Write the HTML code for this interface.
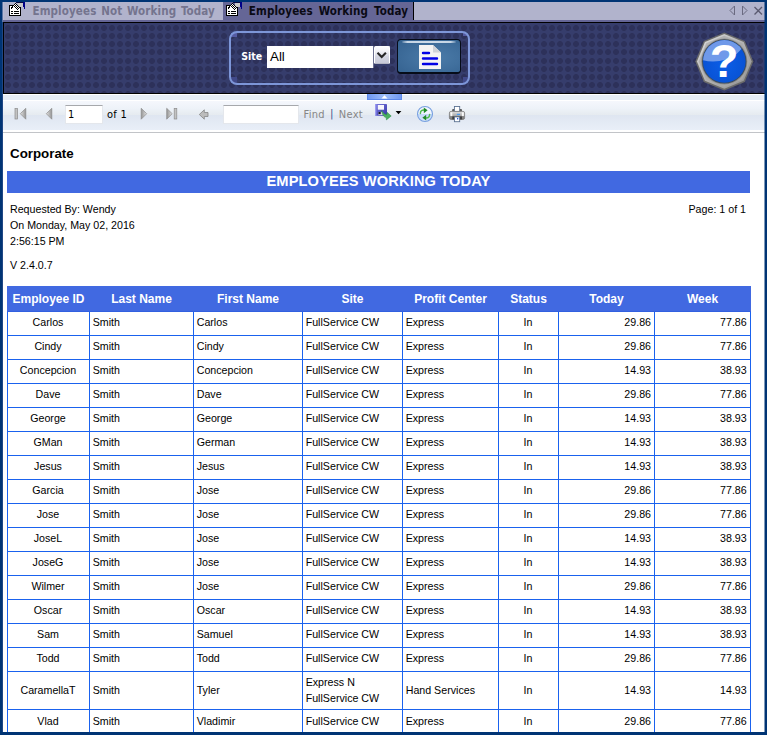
<!DOCTYPE html>
<html>
<head>
<meta charset="utf-8">
<title>Employees Working Today</title>
<style>
html,body{margin:0;padding:0;}
body{width:767px;height:735px;overflow:hidden;background:#003474;position:relative;font-family:"Liberation Sans",sans-serif;}
.abs{position:absolute;}
#hl{left:2px;top:2px;width:763px;height:730px;background:#1f4785;}
#content{left:3px;top:2px;width:762px;height:730px;background:#fff;overflow:hidden;}
/* tab bar */
#tabbar{left:0;top:0;width:762px;height:18px;background:#b1b3cc;}
#tabstrip{left:0;top:18px;width:762px;height:2px;background:#656696;}
#tabhl{left:2px;top:2px;width:1px;height:20px;background:#5c76a4;}
.tab{position:absolute;top:0;height:18px;font-family:"DejaVu Sans Condensed","DejaVu Sans","Liberation Sans",sans-serif;font-weight:bold;font-size:11.5px;letter-spacing:.12px;word-spacing:1px;line-height:18px;white-space:nowrap;}
#tab1{left:0;width:220px;color:#74748e;}
#tab2{left:220px;width:191px;height:20px;background:#656696;color:#0a0a14;}
#tab2:after{content:"";position:absolute;right:0;top:0;width:1px;height:18px;background:#000;}
.tab span{position:absolute;left:29.5px;top:0;}
/* panel */
#panel{left:0;top:20px;width:762px;height:70px;border-top:1px solid #000;border-left:1px solid #000;border-bottom:1px solid #000;
 background-color:#363d6c;
 background-image:radial-gradient(circle at 4px 4px,#2d315a 0,#2d315a 2.55px,rgba(45,49,90,0) 3.35px),radial-gradient(circle at 4px 12px,#2d315a 0,#2d315a 2.55px,rgba(45,49,90,0) 3.35px),radial-gradient(circle at 4px 20px,#2d315a 0,#2d315a 2.55px,rgba(45,49,90,0) 3.35px),radial-gradient(circle at 4px 28px,#2d315a 0,#2d315a 2.55px,rgba(45,49,90,0) 3.35px);
 background-size:8px 33px;background-position:0px 1px;}
#sitebox{left:226px;top:29px;width:237px;height:50px;border:2px solid #7d96d8;border-radius:8px;box-sizing:content-box;}
#sitelbl{left:238.3px;top:45.7px;color:#fff;font-weight:bold;font-size:10.5px;font-family:"DejaVu Sans Condensed","Liberation Sans",sans-serif;line-height:16px;}
#sitesel{left:264px;top:44px;width:106px;height:22px;background:#fff;border-right:1px solid #6c7090;}
#sitesel span{position:absolute;left:3px;top:1.5px;font-size:13.33px;line-height:18px;color:#000;}
#selbtn{left:371px;top:44px;width:16px;height:18px;background:linear-gradient(#fdfdfe 0,#f4f4f8 25%,#d4d6e2 60%,#c8cad8 100%);border:1px solid #fff;border-bottom-color:#b4b6c4;border-radius:1.5px;box-sizing:border-box;}
#gobtn{left:394px;top:37px;width:64px;height:35px;border-radius:4px;border:1px solid #060c18;border-bottom-width:2px;box-sizing:border-box;background:radial-gradient(ellipse at 60% 55%,#4b7ba8 0,#41709e 45%,#33608e 100%);}
/* toolbar */
#tbtop{left:0;top:92px;width:762px;height:6px;background:#e5ecf6;border-top:1px solid #fff;}
#toolbar{left:0;top:98px;width:762px;height:32px;background:linear-gradient(#ffffff 0,#ffffff 1px,#f5f7fc 1px,#eef3f9 8px,#e5eaef 15.5px,#dfe6f1 15.5px,#e9eff8 30.5px,#ffffff 30.5px,#ffffff 32px);border-bottom:1px solid #c2c4c8;}
#handle{left:364px;top:92px;width:35px;height:6px;box-sizing:border-box;background:linear-gradient(90deg,#7098f0 0,#9dbcf8 50%,#7098f0 100%);border:1px solid #5c88ea;border-top:0;}
.tbtxt{position:absolute;font-family:"DejaVu Sans Condensed","Liberation Sans",sans-serif;font-size:11px;letter-spacing:.3px;line-height:16px;white-space:nowrap;}
.inp{position:absolute;background:#fff;border:1px solid #e4e7ec;border-top-color:#a6a8ac;box-sizing:border-box;}
/* report */
#report{left:0;top:131px;width:762px;height:599px;background:#fff;font-size:10.67px;color:#000;}
#report div{position:absolute;white-space:nowrap;}
#titlebar{left:4px;top:38px;width:743px;height:22px;background:#4169e1;color:#fff;font-weight:bold;font-size:14.67px;line-height:20px;text-align:center;letter-spacing:.11px;}
table{position:absolute;left:4px;top:153px;border-collapse:collapse;table-layout:fixed;width:743px;font-size:10.67px;}
th{background:#4169e1;color:#fff;font-weight:bold;font-size:12px;height:25px;box-sizing:border-box;padding:0;line-height:14px;border:1px solid #4169e1;border-bottom-color:#3260e0;text-align:center;}
td{border:1px solid #1a62ee;height:24px;padding:0 3px 4px 2.7px;line-height:16px;box-sizing:border-box;}
tr.tall td{height:38px;padding-bottom:2px;}
tr.last td{padding-bottom:2px;}
td.c{text-align:center;padding-left:2px;padding-right:3px;}
td.r{text-align:right;}
td.r:last-child{padding-right:3.3px;}
</style>
</head>
<body>
<div id="hl" class="abs"></div>
<div id="tabhl" class="abs"></div>
<div id="content" class="abs">
  <div id="tabbar" class="abs"></div>
  <div class="abs" style="left:0;top:0;width:1px;height:18px;background:#b8b9d3"></div>
  <div id="tabstrip" class="abs"></div>
  <div id="tab1" class="tab"><span>Employees Not Working Today</span></div>
  <div id="tab2" class="tab"><span style="left:25.8px;word-spacing:2.3px">Employees Working Today</span></div>
  <svg class="abs" style="left:5px;top:0px" width="18" height="16" viewBox="0 0 18 16" shape-rendering="crispEdges">
<rect x="1.5" y="3.5" width="11" height="10" fill="#fff" stroke="#000"/>
<rect x="3" y="9" width="2" height="1" fill="#000"/><rect x="6" y="9" width="5" height="1" fill="#000"/>
<rect x="3" y="11" width="2" height="1" fill="#000"/><rect x="6" y="11" width="5" height="1" fill="#000"/>
<rect x="8" y="0" width="7" height="1" fill="#0c0c40"/>
<rect x="10" y="1" width="5" height="4" fill="#c8c8c8"/>
<rect x="7" y="2" width="1" height="1" fill="#fff"/><rect x="6" y="3" width="1" height="1" fill="#fff"/><rect x="8" y="3" width="1" height="1" fill="#fff"/><rect x="5" y="4" width="1" height="1" fill="#fff"/><rect x="7" y="4" width="1" height="1" fill="#fff"/><rect x="9" y="4" width="1" height="1" fill="#fff"/><rect x="6" y="5" width="1" height="1" fill="#fff"/><rect x="8" y="5" width="1" height="1" fill="#fff"/><rect x="10" y="5" width="1" height="1" fill="#fff"/><rect x="9" y="6" width="1" height="1" fill="#fff"/><rect x="5" y="5" width="1" height="1" fill="#fff"/><rect x="7" y="1" width="1" height="1" fill="#000"/><rect x="6" y="2" width="1" height="1" fill="#000"/><rect x="8" y="2" width="1" height="1" fill="#000"/><rect x="5" y="3" width="1" height="1" fill="#000"/><rect x="7" y="3" width="1" height="1" fill="#000"/><rect x="9" y="3" width="1" height="1" fill="#000"/><rect x="4" y="4" width="1" height="1" fill="#000"/><rect x="6" y="4" width="1" height="1" fill="#000"/><rect x="8" y="4" width="1" height="1" fill="#000"/><rect x="10" y="4" width="1" height="1" fill="#000"/><rect x="7" y="5" width="1" height="1" fill="#000"/><rect x="9" y="5" width="1" height="1" fill="#000"/><rect x="11" y="5" width="1" height="1" fill="#000"/><rect x="8" y="6" width="1" height="1" fill="#000"/><rect x="10" y="6" width="1" height="1" fill="#000"/><rect x="9" y="7" width="1" height="1" fill="#000"/><rect x="3" y="5" width="1" height="1" fill="#000"/><rect x="4" y="5" width="1" height="1" fill="#000"/><rect x="3" y="6" width="1" height="1" fill="#000"/>
<polygon points="15,0 17,0 17,6.7 16.3,6.7 15,4" fill="#000088"/>
</svg><svg class="abs" style="left:222px;top:0px" width="18" height="16" viewBox="0 0 18 16" shape-rendering="crispEdges">
<rect x="1.5" y="3.5" width="11" height="10" fill="#fff" stroke="#000"/>
<rect x="3" y="9" width="2" height="1" fill="#000"/><rect x="6" y="9" width="5" height="1" fill="#000"/>
<rect x="3" y="11" width="2" height="1" fill="#000"/><rect x="6" y="11" width="5" height="1" fill="#000"/>
<rect x="8" y="0" width="7" height="1" fill="#0c0c40"/>
<rect x="10" y="1" width="5" height="4" fill="#c8c8c8"/>
<rect x="7" y="2" width="1" height="1" fill="#fff"/><rect x="6" y="3" width="1" height="1" fill="#fff"/><rect x="8" y="3" width="1" height="1" fill="#fff"/><rect x="5" y="4" width="1" height="1" fill="#fff"/><rect x="7" y="4" width="1" height="1" fill="#fff"/><rect x="9" y="4" width="1" height="1" fill="#fff"/><rect x="6" y="5" width="1" height="1" fill="#fff"/><rect x="8" y="5" width="1" height="1" fill="#fff"/><rect x="10" y="5" width="1" height="1" fill="#fff"/><rect x="9" y="6" width="1" height="1" fill="#fff"/><rect x="5" y="5" width="1" height="1" fill="#fff"/><rect x="7" y="1" width="1" height="1" fill="#000"/><rect x="6" y="2" width="1" height="1" fill="#000"/><rect x="8" y="2" width="1" height="1" fill="#000"/><rect x="5" y="3" width="1" height="1" fill="#000"/><rect x="7" y="3" width="1" height="1" fill="#000"/><rect x="9" y="3" width="1" height="1" fill="#000"/><rect x="4" y="4" width="1" height="1" fill="#000"/><rect x="6" y="4" width="1" height="1" fill="#000"/><rect x="8" y="4" width="1" height="1" fill="#000"/><rect x="10" y="4" width="1" height="1" fill="#000"/><rect x="7" y="5" width="1" height="1" fill="#000"/><rect x="9" y="5" width="1" height="1" fill="#000"/><rect x="11" y="5" width="1" height="1" fill="#000"/><rect x="8" y="6" width="1" height="1" fill="#000"/><rect x="10" y="6" width="1" height="1" fill="#000"/><rect x="9" y="7" width="1" height="1" fill="#000"/><rect x="3" y="5" width="1" height="1" fill="#000"/><rect x="4" y="5" width="1" height="1" fill="#000"/><rect x="3" y="6" width="1" height="1" fill="#000"/>
<polygon points="15,0 17,0 17,6.7 16.3,6.7 15,4" fill="#000088"/>
</svg><svg class="abs" style="left:724px;top:3px" width="37" height="12" viewBox="0 0 37 12">
<polygon points="3,5.5 7.5,1 7.5,10" fill="none" stroke="#6a6a80" stroke-width="1"/>
<polygon points="20,5.5 15.5,1 15.5,10" fill="none" stroke="#6a6a80" stroke-width="1"/>
<path d="M27.5,2 L35,9.5 M35,2 L27.5,9.5" stroke="#5a5a70" stroke-width="1.4" fill="none"/>
</svg>
  <div id="panel" class="abs"></div>
    <div class="abs" style="left:228px;top:31px;width:6px;height:4px;background:#555ba2;"></div>
  <div class="abs" style="left:228px;top:75px;width:6px;height:6px;background:#414989;"></div>
  <div class="abs" style="left:460px;top:31px;width:4px;height:3px;background:#555ba2;"></div>
  <div class="abs" style="left:460px;top:75px;width:5px;height:6px;background:#414989;"></div>
  <div id="sitebox" class="abs"></div>
  <div id="sitelbl" class="abs">Site</div>
  <div id="sitesel" class="abs"><span>All</span></div>
  <div id="selbtn" class="abs"><svg width="16" height="18" viewBox="0 0 16 18" style="position:absolute;left:-1px;top:-1px"><path d="M3.5,6.8 L7.7,11 L11.9,6.8" fill="none" stroke="#262626" stroke-width="2.1"/></svg></div>
  <div id="gobtn" class="abs"><div style="position:absolute;left:4px;top:1px;width:54px;height:2px;border-radius:2px;background:linear-gradient(90deg,rgba(200,216,232,.2),#c4d4e4 10%,#cddbe9 50%,#c4d4e4 90%,rgba(200,216,232,.2));"></div>
<svg width="24" height="26" viewBox="0 0 24 26" style="position:absolute;left:20px;top:4px"><path d="M1,1 H15 L23,8.5 V25 H1 Z" fill="#f3f3f3"/><path d="M15,1 L23,8.5 H15 Z" fill="#cfd2d8"/>
<path d="M5,9 H11 M5,14.5 H19 M5,20 H19" stroke="#0000e6" stroke-width="2.4" stroke-linecap="round"/></svg></div>
  <svg class="abs" style="left:684px;top:22px" width="74" height="74" viewBox="0 0 74 74">
<defs><linearGradient id="hg" x1="0" y1="0" x2="1" y2="1"><stop offset="0" stop-color="#e0e0e0"/><stop offset=".5" stop-color="#b4b4b4"/><stop offset="1" stop-color="#8c8c8c"/></linearGradient>
<radialGradient id="hb" cx=".5" cy=".55" r=".6"><stop offset="0" stop-color="#0c5ee8"/><stop offset="1" stop-color="#0850d0"/></radialGradient>
<clipPath id="hc"><circle cx="37.3" cy="37.4" r="21.3"/></clipPath></defs>
<polygon points="37.3,8.4 16.8,16.9 8.3,37.4 16.8,57.9 37.3,66.4 57.8,57.9 66.3,37.4 57.8,16.9" fill="#6a6a6a"/>
<polygon points="37.3,10.0 17.9,18.0 9.9,37.4 17.9,56.8 37.3,64.8 56.7,56.8 64.7,37.4 56.7,18.0" fill="url(#hg)"/>
<polygon points="37.3,11.8 19.2,19.3 11.7,37.4 19.2,55.5 37.3,63.0 55.4,55.5 62.9,37.4 55.4,19.3" fill="#a9a9a9" opacity=".75"/>
<circle cx="37.3" cy="37.4" r="23" fill="#8a8a8a"/>
<circle cx="37.3" cy="37.4" r="22.2" fill="#3a4a5c"/>
<circle cx="37.3" cy="37.4" r="21.3" fill="url(#hb)"/>
<ellipse cx="26" cy="10" rx="34" ry="27.5" fill="#78a0ea" opacity=".92" clip-path="url(#hc)"/>
<text x="37.2" y="52.8" font-family="Liberation Sans, sans-serif" font-weight="bold" font-size="47" fill="#fff" text-anchor="middle">?</text>
</svg>
  <div id="tbtop" class="abs"></div>
  <div id="toolbar" class="abs"></div>
  <svg class="abs" style="left:0;top:96px" width="761" height="32" viewBox="0 0 761 32">
<defs><linearGradient id="ng" x1="0" y1="0" x2="1" y2="0"><stop offset="0" stop-color="#e2e2e2"/><stop offset="1" stop-color="#949494"/></linearGradient>
<linearGradient id="ng2" x1="1" y1="0" x2="0" y2="0"><stop offset="0" stop-color="#e2e2e2"/><stop offset="1" stop-color="#949494"/></linearGradient>
<linearGradient id="fl" x1="0" y1="0" x2="1" y2="1"><stop offset="0" stop-color="#7a7ae0"/><stop offset="1" stop-color="#3434a8"/></linearGradient>
<linearGradient id="pr" x1="0" y1="0" x2="0" y2="1"><stop offset="0" stop-color="#e2e2e2"/><stop offset=".55" stop-color="#a8a8a8"/><stop offset=".6" stop-color="#8c8c8c"/><stop offset="1" stop-color="#7a7a7a"/></linearGradient>
<linearGradient id="rf" x1="0" y1="0" x2="0" y2="1"><stop offset="0" stop-color="#f4f8ff"/><stop offset=".5" stop-color="#eef4fe"/><stop offset=".5" stop-color="#c4d8f8"/><stop offset="1" stop-color="#d4e4fa"/></linearGradient></defs>
<!-- first -->
<rect x="12" y="10.5" width="2.6" height="10.5" fill="#c2c2c2" stroke="#8c8c8c" stroke-width=".7"/>
<polygon points="17.3,15.7 22.8,10.3 22.8,21.2" fill="url(#ng)" stroke="#8c8c8c" stroke-width=".7"/>
<!-- prev -->
<polygon points="43.3,15.7 48.8,10.3 48.8,21.2" fill="url(#ng)" stroke="#8c8c8c" stroke-width=".7"/>
<!-- next -->
<polygon points="143.7,15.7 138.2,10.3 138.2,21.2" fill="url(#ng2)" stroke="#8c8c8c" stroke-width=".7"/>
<!-- last -->
<polygon points="169.2,15.7 163.7,10.3 163.7,21.2" fill="url(#ng2)" stroke="#8c8c8c" stroke-width=".7"/>
<rect x="171.2" y="10.5" width="2.6" height="10.5" fill="#c2c2c2" stroke="#8c8c8c" stroke-width=".7"/>
<!-- back -->
<path d="M196.3,16.5 L201.3,11.8 V14.5 H205 V18.5 H201.3 V21.2 Z" fill="#bcbcbc" stroke="#868686" stroke-width=".8"/>
<!-- save -->
<rect x="372" y="6" width="12" height="11.8" rx=".8" fill="url(#fl)"/>
<rect x="372" y="6" width="1.4" height="11.8" fill="#9c9cf0"/>
<rect x="374.8" y="7" width="6.2" height="4.7" fill="#f6f6fc"/>
<rect x="375.5" y="14" width="4.5" height="3" fill="#dcdce8"/>
<rect x="375.5" y="14" width="2.2" height="2.2" fill="#101020"/>
<path d="M378.6,12.3 C379.8,15 381.2,16.4 383.7,16.8 L384.1,14.3 L388.2,18 L383.4,21.9 L383.2,19.6 C380.8,19.2 379,16.4 378.6,12.3 Z" fill="#4bb060" stroke="#2f8c46" stroke-width=".5"/>
<polygon points="392.6,13 398.4,13 395.5,16.2" fill="#000"/>
<!-- refresh -->
<circle cx="422" cy="16" r="7.5" fill="url(#rf)" stroke="#78a0e0" stroke-width="1.1"/>
<path d="M417.4,15.4 C417.4,12.8 419,11.9 421.4,12.1" fill="none" stroke="#52bc52" stroke-width="1.5" stroke-linecap="round"/>
<polygon points="420.8,9.4 424.6,12.3 420.8,15.2" fill="#1f8a24"/>
<path d="M426.6,16.6 C426.6,19.2 425,20.1 422.6,19.9" fill="none" stroke="#52bc52" stroke-width="1.5" stroke-linecap="round"/>
<polygon points="423.2,16.8 419.4,19.7 423.2,22.6" fill="#1f8a24"/>
<!-- print -->
<rect x="449.1" y="11" width="9.9" height="2.6" rx="1" fill="#5a5a5a"/>
<rect x="451.4" y="8.5" width="5.3" height="5" fill="#fff" stroke="#5c7292" stroke-width=".9"/>
<rect x="446.4" y="13.4" width="15.2" height="8" rx="1.6" fill="url(#pr)" stroke="#7a7a7a" stroke-width=".8"/>
<rect x="447.5" y="14.4" width="1.8" height="3.6" fill="#fff" opacity=".9"/>
<rect x="458.9" y="14.4" width="1.9" height="3.6" fill="#fff" opacity=".9"/>
<rect x="449.3" y="18.4" width="9.6" height="3" fill="#3a3a3a"/>
<rect x="453.9" y="15.8" width="3.1" height="1.3" fill="#4a9cf4"/>
<rect x="451.4" y="18.9" width="5.3" height="4.8" fill="#fff" stroke="#5c7292" stroke-width=".9"/>
<rect x="454" y="20" width="1.3" height="1.4" fill="#2a5ae0"/>
</svg>
  <div id="handle" class="abs"><svg width="35" height="6" style="position:absolute;left:-1px;top:0"><polygon points="14.5,4.6 20.5,4.6 17.5,1.2" fill="#fff"/></svg></div>
  <div class="inp" style="left:62px;top:103px;width:38px;height:19px;"></div>
  <div class="tbtxt" style="left:65px;top:105px;color:#000;">1</div>
  <div class="tbtxt" style="left:104px;top:105px;color:#000;">of 1</div>
  <div class="inp" style="left:220px;top:103px;width:76px;height:19px;"></div>
  <div class="tbtxt" style="left:300.5px;top:105px;color:#868686;">Find</div><div class="tbtxt" style="left:327.3px;top:104px;color:#283880;font-size:10px;">|</div><div class="tbtxt" style="left:335.8px;top:105px;color:#868686;">Next</div>
  <div class="abs" style="left:761px;top:0;width:1px;height:730px;background:rgba(0,52,116,.5);z-index:5"></div>
  <div id="report" class="abs">
    <div style="left:7px;top:12.5px;font-weight:bold;font-size:13.33px;line-height:16px;">Corporate</div>
    <div id="titlebar">EMPLOYEES WORKING TODAY</div>
    <div style="left:7px;top:68px;line-height:16px;">Requested By: Wendy</div>
    <div style="left:7px;top:84px;line-height:16px;">On Monday, May 02, 2016</div>
    <div style="left:7px;top:100px;line-height:16px;">2:56:15 PM</div>
    <div style="left:7px;top:124px;line-height:16px;">V 2.4.0.7</div>
    <div style="right:19px;top:68px;line-height:16px;">Page: 1 of 1</div>
    <table>
      <colgroup><col style="width:82px"><col style="width:104px"><col style="width:109px"><col style="width:100px"><col style="width:96px"><col style="width:60px"><col style="width:96px"><col style="width:96px"></colgroup>
      <tr><th>Employee ID</th><th>Last Name</th><th>First Name</th><th>Site</th><th>Profit Center</th><th>Status</th><th>Today</th><th>Week</th></tr>
      <tr><td class="c">Carlos</td><td>Smith</td><td>Carlos</td><td>FullService CW</td><td>Express</td><td class="c">In</td><td class="r">29.86</td><td class="r">77.86</td></tr>
      <tr><td class="c">Cindy</td><td>Smith</td><td>Cindy</td><td>FullService CW</td><td>Express</td><td class="c">In</td><td class="r">29.86</td><td class="r">77.86</td></tr>
      <tr><td class="c">Concepcion</td><td>Smith</td><td>Concepcion</td><td>FullService CW</td><td>Express</td><td class="c">In</td><td class="r">14.93</td><td class="r">38.93</td></tr>
      <tr><td class="c">Dave</td><td>Smith</td><td>Dave</td><td>FullService CW</td><td>Express</td><td class="c">In</td><td class="r">29.86</td><td class="r">77.86</td></tr>
      <tr><td class="c">George</td><td>Smith</td><td>George</td><td>FullService CW</td><td>Express</td><td class="c">In</td><td class="r">14.93</td><td class="r">38.93</td></tr>
      <tr><td class="c">GMan</td><td>Smith</td><td>German</td><td>FullService CW</td><td>Express</td><td class="c">In</td><td class="r">14.93</td><td class="r">38.93</td></tr>
      <tr><td class="c">Jesus</td><td>Smith</td><td>Jesus</td><td>FullService CW</td><td>Express</td><td class="c">In</td><td class="r">14.93</td><td class="r">38.93</td></tr>
      <tr><td class="c">Garcia</td><td>Smith</td><td>Jose</td><td>FullService CW</td><td>Express</td><td class="c">In</td><td class="r">29.86</td><td class="r">77.86</td></tr>
      <tr><td class="c">Jose</td><td>Smith</td><td>Jose</td><td>FullService CW</td><td>Express</td><td class="c">In</td><td class="r">29.86</td><td class="r">77.86</td></tr>
      <tr><td class="c">JoseL</td><td>Smith</td><td>Jose</td><td>FullService CW</td><td>Express</td><td class="c">In</td><td class="r">14.93</td><td class="r">38.93</td></tr>
      <tr><td class="c">JoseG</td><td>Smith</td><td>Jose</td><td>FullService CW</td><td>Express</td><td class="c">In</td><td class="r">14.93</td><td class="r">38.93</td></tr>
      <tr><td class="c">Wilmer</td><td>Smith</td><td>Jose</td><td>FullService CW</td><td>Express</td><td class="c">In</td><td class="r">29.86</td><td class="r">77.86</td></tr>
      <tr><td class="c">Oscar</td><td>Smith</td><td>Oscar</td><td>FullService CW</td><td>Express</td><td class="c">In</td><td class="r">14.93</td><td class="r">38.93</td></tr>
      <tr><td class="c">Sam</td><td>Smith</td><td>Samuel</td><td>FullService CW</td><td>Express</td><td class="c">In</td><td class="r">14.93</td><td class="r">38.93</td></tr>
      <tr><td class="c">Todd</td><td>Smith</td><td>Todd</td><td>FullService CW</td><td>Express</td><td class="c">In</td><td class="r">29.86</td><td class="r">77.86</td></tr>
      <tr class="tall"><td class="c">CaramellaT</td><td>Smith</td><td>Tyler</td><td>Express N<br>FullService CW</td><td>Hand Services</td><td class="c">In</td><td class="r">14.93</td><td class="r">14.93</td></tr>
      <tr class="last"><td class="c">Vlad</td><td>Smith</td><td>Vladimir</td><td>FullService CW</td><td>Express</td><td class="c">In</td><td class="r">29.86</td><td class="r">77.86</td></tr>
    </table>
  </div>
</div>
</body>
</html>
